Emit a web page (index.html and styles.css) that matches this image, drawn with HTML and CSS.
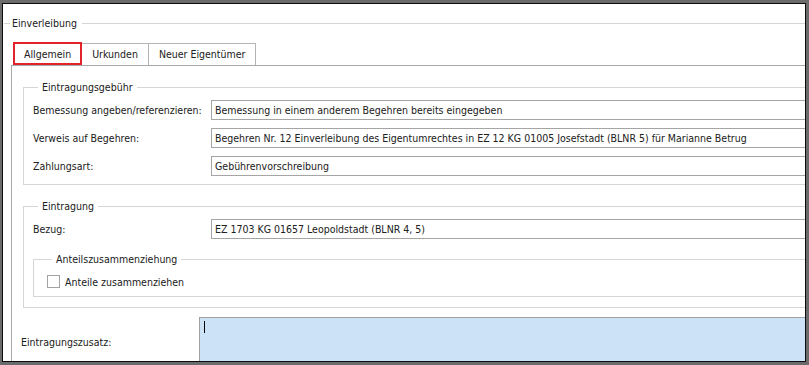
FILE: index.html
```html
<!DOCTYPE html>
<html>
  <head>
    <link rel="stylesheet" href="styles.css">
  </head>
  <body>
    <div class="window">
      <div class="window-inner">
        <div class="header">Einverleibung</div>

        <div class="tabs">
          <div class="tab tab_active">Allgemein</div>
          <div class="tab">Urkunden</div>
          <div class="tab">Neuer Eigentümer</div>
        </div>

        <div class="panel">
          <fieldset class="group group_first">
            <legend>Eintragungsgebühr</legend>
            <div class="row">
              <div class="label">Bemessung angeben/referenzieren:</div>
              <div class="field">Bemessung in einem anderem Begehren bereits eingegeben</div>
            </div>
            <div class="row">
              <div class="label">Verweis auf Begehren:</div>
              <div class="field">Begehren Nr. 12 Einverleibung des Eigentumrechtes in EZ 12 KG 01005 Josefstadt (BLNR 5) für Marianne Betrug</div>
            </div>
            <div class="row">
              <div class="label">Zahlungsart:</div>
              <div class="field">Gebührenvorschreibung</div>
            </div>
          </fieldset>

          <fieldset class="group">
            <legend>Eintragung</legend>
            <div class="row">
              <div class="label">Bezug:</div>
              <div class="field">EZ 1703 KG 01657 Leopoldstadt (BLNR 4, 5)</div>
            </div>
            <fieldset class="subgroup">
              <legend>Anteilszusammenziehung</legend>
              <label class="check">
                <span class="check-box"></span>
                <span>Anteile zusammenziehen</span>
              </label>
            </fieldset>
          </fieldset>

          <div class="memo-row">
            <div class="label">Eintragungszusatz:</div>
            <div class="memo"><span class="caret"></span></div>
          </div>
        </div>
      </div>
    </div>
  </body>
</html>
```

FILE: styles.css
```css
* {
  box-sizing: border-box;
}

body {
  margin: 0;
  background: #ffffff;
  font-family: "DejaVu Sans Condensed", "Liberation Sans", Arial, sans-serif;
  font-size: 10.5px;
  color: #202020;
}

.window {
  width: 809px;
  height: 365px;
  border-style: solid;
  border-color: #6b6b6b;
  border-width: 3px 3px 3px 2px;
}

.window-inner {
  height: 100%;
  border: 1px solid #0c0c0c;
  overflow: hidden;
  background: #ffffff;
}

/* group title with line */

.header {
  display: flex;
  align-items: center;
  margin-top: 13px;
  line-height: 13px;
}
.header::before {
  content: "";
  width: 6px;
  height: 1px;
  margin: 0 2px 0 1px;
  background: #d4d4d4;
}
.header::after {
  content: "";
  flex: 1;
  height: 1px;
  margin-left: 5px;
  background: #d4d4d4;
}

/* tabs */

.tabs {
  display: flex;
  align-items: flex-end;
  height: 23px;
  margin: 12px 0 0 10px;
}

.tab {
  height: 22px;
  padding: 0 10px;
  line-height: 21px;
  border: 1px solid #b4b4b4;
  border-bottom: none;
  margin-left: -1px;
  background: #ffffff;
  white-space: nowrap;
}

.tab_active {
  position: relative;
  z-index: 1;
  height: 23px;
  padding: 0 9px;
  line-height: 20px;
  border: 2px solid #e3232b;
  margin-left: 0;
}

.panel {
  width: 860px;
  height: 400px;
  margin-left: 8px;
  padding-left: 9px;
  border-top: 1px solid #a9a9a9;
  border-left: 1px solid #a9a9a9;
}

/* group boxes */

.group,
.subgroup {
  margin: 0;
  min-width: 0;
  border: 1px solid #d6d6d6;
  padding: 5px 0 8px 9px;
}

.group {
  margin: 14px 0 0 2px;
}

.group + .group {
  padding-bottom: 10px;
}

.group legend,
.subgroup legend {
  margin-left: 5px;
  padding: 0 4px;
  line-height: 15px;
}

.subgroup {
  margin-top: 13px;
  padding: 8px 0 8px 13px;
}

.row {
  display: flex;
  align-items: center;
  height: 20px;
}

.row + .row {
  margin-top: 8px;
}

.label {
  width: 178px;
  flex-shrink: 0;
  white-space: nowrap;
}

.field {
  flex: 1;
  height: 20px;
  padding: 0 3px;
  line-height: 18px;
  border: 1px solid #a5a5a5;
  white-space: nowrap;
  overflow: hidden;
}

.check {
  display: flex;
  align-items: center;
  gap: 5px;
  height: 13px;
}

.check-box {
  width: 13px;
  height: 13px;
  border: 1px solid #a3a3a3;
  background: #ffffff;
}

/* memo */

.memo-row {
  display: flex;
  align-items: center;
  margin-top: 9px;
}

.memo {
  flex: 1;
  height: 50px;
  padding: 3px 4px;
  border: 1px solid #a0a0a0;
  background: #cce3f7;
}

.caret {
  display: block;
  width: 1px;
  height: 12px;
  background: #000000;
}
```
